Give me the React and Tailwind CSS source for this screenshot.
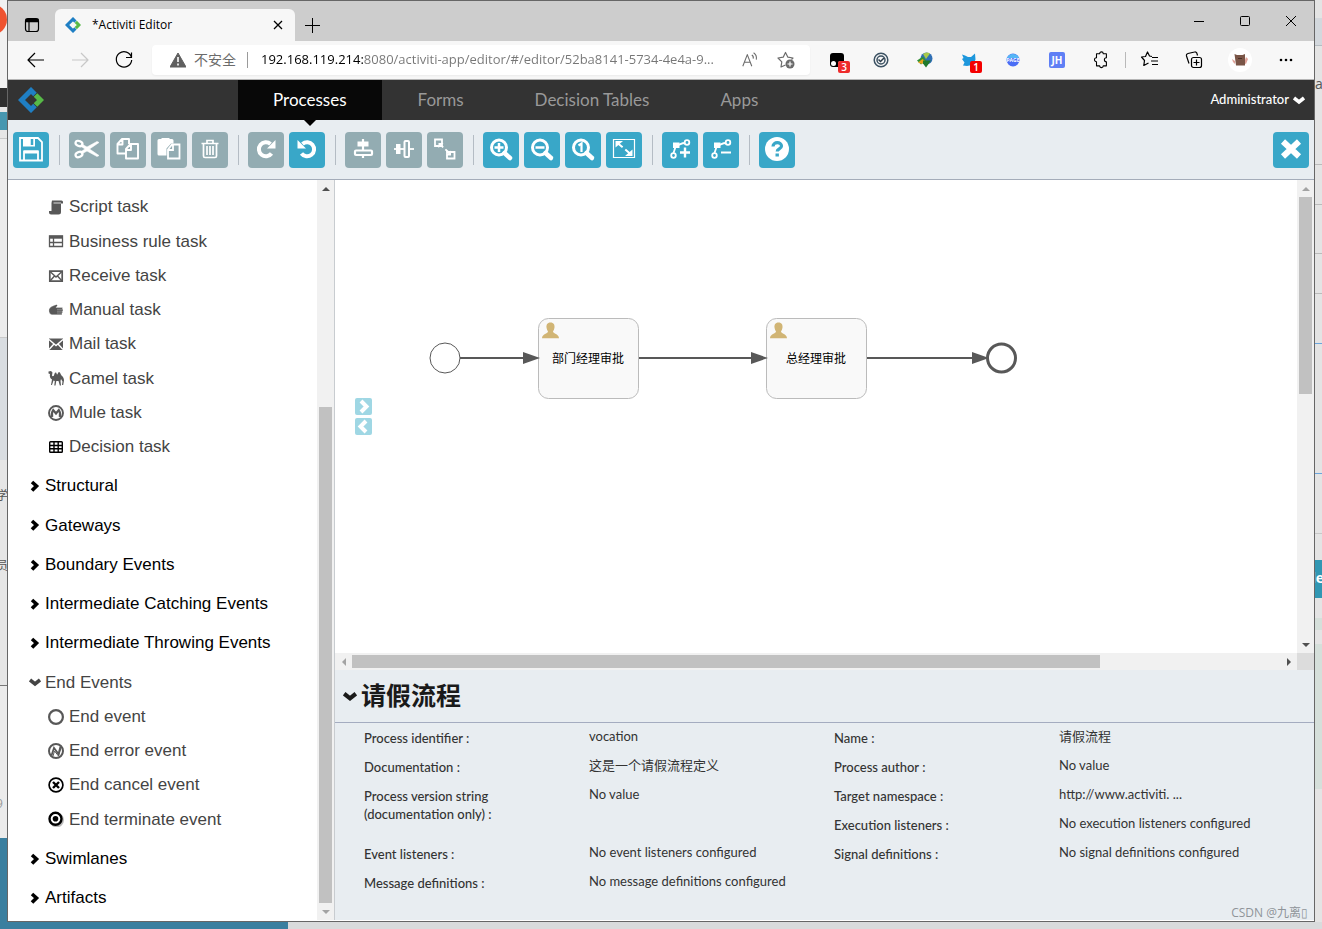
import clsx from 'clsx'

const NAV_LINKS = ['Processes', 'Forms', 'Decision Tables', 'Apps']

const TASKS = [
  { label: 'Script task', icon: 'script' },
  { label: 'Business rule task', icon: 'rule' },
  { label: 'Receive task', icon: 'receive' },
  { label: 'Manual task', icon: 'manual' },
  { label: 'Mail task', icon: 'mail' },
  { label: 'Camel task', icon: 'camel' },
  { label: 'Mule task', icon: 'mule' },
  { label: 'Decision task', icon: 'decision' },
]

const GROUPS = [
  'Structural',
  'Gateways',
  'Boundary Events',
  'Intermediate Catching Events',
  'Intermediate Throwing Events',
]

const END_EVENTS = [
  { label: 'End event', icon: 'end' },
  { label: 'End error event', icon: 'endError' },
  { label: 'End cancel event', icon: 'endCancel' },
  { label: 'End terminate event', icon: 'endTerminate' },
]

const TOOL_GROUPS = [
  [{ id: 'save', label: 'Save' }],
  [
    { id: 'cut', label: 'Cut', disabled: true },
    { id: 'copy', label: 'Copy', disabled: true },
    { id: 'paste', label: 'Paste', disabled: true },
    { id: 'trash', label: 'Delete', disabled: true },
  ],
  [
    { id: 'redo', label: 'Redo', disabled: true },
    { id: 'undo', label: 'Undo' },
  ],
  [
    { id: 'alignV', label: 'Align vertical', disabled: true },
    { id: 'alignH', label: 'Align horizontal', disabled: true },
    { id: 'sameSize', label: 'Same size', disabled: true },
  ],
  [
    { id: 'zoomIn', label: 'Zoom in' },
    { id: 'zoomOut', label: 'Zoom out' },
    { id: 'zoomActual', label: 'Zoom to actual size' },
    { id: 'zoomFit', label: 'Zoom to fit' },
  ],
  [
    { id: 'bendAdd', label: 'Add bend-point' },
    { id: 'bendRemove', label: 'Remove bend-point' },
  ],
  [{ id: 'help', label: 'Start guided tour' }],
]

const PROPERTIES = [
  { label: 'Process identifier', value: 'vocation' },
  { label: 'Name', value: '请假流程' },
  { label: 'Documentation', value: '这是一个请假流程定义' },
  { label: 'Process author', value: 'No value' },
  { label: 'Process version string (documentation only)', value: 'No value', tall: true },
  { label: 'Target namespace', value: 'http://www.activiti. ...' },
  { label: 'Execution listeners', value: 'No execution listeners configured' },
  { label: 'Event listeners', value: 'No event listeners configured' },
  { label: 'Signal definitions', value: 'No signal definitions configured' },
  { label: 'Message definitions', value: 'No message definitions configured' },
]

const zoomGlass = (
  <>
    <circle cx="16" cy="15.5" r="7.5" fill="none" strokeWidth="3" />
    <path d="M21.5 21 27 26" strokeWidth="4.5" strokeLinecap="round" />
  </>
)

const bendLine = (
  <>
    <path d="M11.5 21 14 13.5c3 0 5-2.500 9-2.500" fill="none" strokeWidth="1.8" />
    <circle cx="11.5" cy="23.5" r="2.3" fill="none" strokeWidth="1.8" />
    <circle cx="25" cy="10.5" r="2.3" fill="none" strokeWidth="1.8" />
    <path d="M11 10.500h6.500V16H11z" stroke="none" />
  </>
)

const redoArrow = (
  <>
    <path d="M23.5 21.500A7 7 0 1 1 22.500 12" fill="none" strokeWidth="4" />
    <path d="M27.500 8v8.500H19z" stroke="none" />
  </>
)

const TOOL_ICONS = {
  save: (
    <>
      <path d="M7 6h18l4 4v18.500H7z" fill="none" strokeWidth="1.8" />
      <path d="M10 6h12v8.500H10z" stroke="none" />
      <path d="M19 7v6" stroke="#39a7c8" strokeWidth="2.5" />
      <path d="M11 28v-8.500h14V28" fill="none" strokeWidth="1.8" />
      <path d="M11 20h14" strokeWidth="3" />
    </>
  ),
  cut: (
    <>
      <ellipse cx="10" cy="11.5" rx="3.6" ry="2.5" transform="rotate(25 10 11.5)" fill="none" strokeWidth="2.2" />
      <ellipse cx="10" cy="22.5" rx="3.6" ry="2.5" transform="rotate(-25 10 22.5)" fill="none" strokeWidth="2.2" />
      <path
        d="M12.500 12 18 15l10-5.500 2 1L20.500 17l9.500 6.500-2 1L18 19l-5.500 3-1-2 4.500-3-4.500-3z"
        stroke="#fff"
        strokeWidth=".6"
      />
    </>
  ),
  copy: (
    <g fill="none" strokeWidth="1.9" strokeLinejoin="round">
      <path d="M16 21.500H7.500V12L12 7h7v5M12.500 7v5.500H8" />
      <path d="M16 17 20.500 12H28v14.500H16zM21 12.500v5.500h-4.500" />
    </g>
  ),
  paste: (
    <>
      <path
        d="M8 7h2.500V6h8v1H21a1.500 1.500 0 0 1 1.500 1.500v3H20l-4.500 5v7H8A1.500 1.500 0 0 1 6.500 22V8.500A1.500 1.500 0 0 1 8 7z"
        stroke="none"
      />
      <path d="M17 17.500 21 12.500h7.500v14H17zM22 13v5h-4.500" fill="none" strokeWidth="1.8" />
    </>
  ),
  trash: (
    <g fill="none" strokeWidth="1.7">
      <path d="M9.500 11.500h17M15 11V8.500h6V11M11.500 12v12a1.500 1.500 0 0 0 1.500 1.500h10a1.500 1.500 0 0 0 1.500-1.500V12" />
      <path d="M15 14v9M18 14v9M21 14v9" />
    </g>
  ),
  redo: redoArrow,
  undo: <g transform="matrix(-1 0 0 1 36 0)">{redoArrow}</g>,
  alignV: (
    <>
      <path d="M18 7v19" strokeWidth="2.2" />
      <path d="M12.500 9.500h11v5h-11z" stroke="none" />
      <rect x="10" y="18.5" width="17" height="4.5" rx="1" strokeWidth="2.2" fill="#93acb2" />
    </>
  ),
  alignH: (
    <>
      <path d="M8 17h20" strokeWidth="1.8" />
      <path d="M10 12h4.500v10H10z" stroke="none" />
      <rect x="18.5" y="9" width="4.5" height="16" rx="1" strokeWidth="2" fill="#93acb2" />
    </>
  ),
  sameSize: (
    <>
      <path d="M8 7.500h7V14H8zM20 20h7.500v6.500H20z" fill="none" strokeWidth="1.8" />
      <path d="m12.500 12 11 10" strokeWidth="1.8" strokeDasharray="5 3" />
      <path d="M11.500 11h5l-5 5zM24 23.500h-5l5-5z" stroke="none" />
    </>
  ),
  zoomIn: (
    <>
      {zoomGlass}
      <path d="M11.500 15.500h9M16 11v9" strokeWidth="2.5" />
    </>
  ),
  zoomOut: (
    <>
      {zoomGlass}
      <path d="M11.500 15.500h9" strokeWidth="2.5" />
    </>
  ),
  zoomActual: (
    <>
      {zoomGlass}
      <path d="M13.500 13.500 16.500 11.500V20" fill="none" strokeWidth="2.2" />
    </>
  ),
  zoomFit: (
    <>
      <path d="M7.500 7.500h21v18h-21z" fill="none" strokeWidth="1.2" />
      <path d="m12 11.500 12 10" strokeWidth="2" strokeDasharray="6 3.5" />
      <path d="M9.500 9H17l-7.500 6.500zM26.500 24H19l7.500-6.500z" stroke="none" />
    </>
  ),
  bendAdd: (
    <>
      {bendLine}
      <path d="M18 20.500h10M23 15.500v10" strokeWidth="2.4" />
    </>
  ),
  bendRemove: (
    <>
      {bendLine}
      <path d="M18 20.500h10" strokeWidth="2" />
    </>
  ),
  help: (
    <>
      <circle cx="18" cy="17" r="12" stroke="none" />
      <path d="M14 14.500c0-5 8.500-5 8.500-.5 0 3-4.300 2.800-4.300 5.500" fill="none" stroke="#39a7c8" strokeWidth="3.2" />
      <path d="M16.500 21.500h3.400v3h-3.400z" fill="#39a7c8" stroke="none" />
    </>
  ),
  close: <path d="m10 9.500 16 15M26 9.500l-16 15" strokeWidth="6" />,
}

const STENCIL_ICONS = {
  script: (
    <>
      <path d="M4 1.500h9.500A1.500 1.500 0 0 1 15 3v1.500h-2V13a2.500 2.500 0 0 1-2.500 2.500H3A2 2 0 0 1 1 13.500V12h2.500V4z" fill="#585858" />
      <path d="M5.500 4h7.500" stroke="#fff" strokeWidth=".8" />
    </>
  ),
  rule: (
    <g fill="none" stroke="#585858" strokeWidth="1.3">
      <path d="M1.500 3h13v10.500h-13z" />
      <path d="M1 4.200h14" strokeWidth="3" />
      <path d="M1.500 9.500h13M5.500 5v8.500" />
    </g>
  ),
  receive: (
    <g fill="none" stroke="#585858">
      <path d="M1.800 3.200h12.400v10H1.800z" strokeWidth="1.7" />
      <path d="m2 3.500 6 5.500 6-5.500M2 13l4.500-5M14 13 9.500 8" strokeWidth="1.4" />
    </g>
  ),
  manual: (
    <path
      d="M1 7.500C2 4.500 6 3.500 8.500 2.500l1 1L8 5.500h6.500v1.800h.5v1.900h-.5v1.800H14v1.800H4.500C2.500 12.800.5 11 1 7.500zM9 7.300h5.500M9 9.200h6M9 11h5"
      fill="#585858"
      stroke="#fff"
      strokeWidth=".3"
    />
  ),
  mail: (
    <>
      <path d="M1 2.500h14V14H1z" fill="#585858" />
      <path d="m1 3.500 7 6 7-6M1 13.500 6 8M15 13.500 10 8" fill="none" stroke="#fff" strokeWidth="1.4" />
    </>
  ),
  camel: (
    <path
      d="M.5 1.500 3 1l1.500 1.500L4 5.500c.3 1 1.300 1 2 0C6.300 3.800 7 2 8 2.500c.8.500.5 2 1.200 2 .8 0 .6-2.500 1.800-2.500 1.500 0 1.500 2.500 2.500 3.500 1.700 1 2.500 3 2.500 5l-.8 4.500H14l.5-3.500-1.500-2.500-.5 2 .5 4.500h-1.200L10.500 11H8.300l-.8 4.500H6.300L6.800 11l-1.300-.5L4 15H3l1-5.500C2 8.500 1.500 6 2 4L.5 3.500z"
      fill="#585858"
    />
  ),
  mule: (
    <g fill="none" stroke="#585858">
      <circle cx="8" cy="8" r="7" strokeWidth="1.9" />
      <path d="M4.200 12c-1-3 0-5.500 1-7L8 8.500 10.800 5c1 1.500 2 4 1 7" strokeWidth="2.2" />
    </g>
  ),
  decision: (
    <g fill="none" stroke="#000" strokeWidth="1.4">
      <rect x="1.7" y="2.7" width="12.6" height="10.6" rx=".8" />
      <path d="M1.500 6.500h13M1.500 9.800h13M6 3v10.500M10.200 3v10.500" />
    </g>
  ),
  end: <circle cx="8" cy="8" r="6.900" fill="none" stroke="#585858" strokeWidth="2.2" />,
  endError: (
    <g fill="none" stroke="#585858">
      <circle cx="8" cy="8" r="7" strokeWidth="2" />
      <path d="M3.500 12.500 6 5l4.500 6 2-7.500" strokeWidth="1.8" />
      <path d="M5 13 6.500 8l4 5 2.500-8" />
    </g>
  ),
  endCancel: (
    <g fill="none" stroke="#000">
      <circle cx="8" cy="8" r="6.900" strokeWidth="1.700" />
      <path d="m5 5 6 6M11 5l-6 6" strokeWidth="2.4" />
    </g>
  ),
  endTerminate: (
    <>
      <circle cx="8.7" cy="9" r="6.300" fill="none" stroke="#bbb" strokeWidth="2" />
      <circle cx="7.5" cy="7.8" r="6" fill="#fff" stroke="#000" strokeWidth="2.4" />
      <circle cx="7.5" cy="7.8" r="2.8" />
    </>
  ),
}

function Logo({ className }) {
  return (
    <svg viewBox="0 0 26 26" className={className} fill="none" strokeWidth="5" aria-hidden="true">
      <path d="m17 7.500-4-4L3.500 13l9.500 9.500 4-4" stroke="#1f7fc4" />
      <path d="m17.500 8 5 5-5 5" stroke="#57b947" />
    </svg>
  )
}

function Chevron({ open, className }) {
  return (
    <svg viewBox="0 0 12 12" className={className} fill="none" stroke="currentColor" strokeWidth="3.6" aria-hidden="true">
      <path d={open ? 'm1 4 5 4 5-4' : 'm3 2 4.500 4L3 10.500'} />
    </svg>
  )
}

function ChromeButton({ label, wide, className, children }) {
  return (
    <button
      type="button"
      aria-label={label}
      className={clsx('flex h-full shrink-0 items-center justify-center', wide ? 'w-12' : 'w-11', className)}
    >
      {children}
    </button>
  )
}

function LineIcon({ children, className = 'size-5' }) {
  return (
    <svg
      viewBox="0 0 20 20"
      className={className}
      fill="none"
      stroke="currentColor"
      strokeWidth="1.2"
      strokeLinejoin="round"
      aria-hidden="true"
    >
      {children}
    </svg>
  )
}

function TitleBar() {
  return (
    <div className="flex h-10 items-end bg-[#cdcdcd]">
      <button type="button" aria-label="Tab actions" className="flex h-8 w-[47px] items-center justify-center">
        <LineIcon>
          <rect x="3.500" y="3.500" width="13" height="13" rx="2.500" />
          <path d="M3.500 5h13M3.500 6h13" strokeWidth="2.500" />
          <path d="M7 6v10.500" />
        </LineIcon>
      </button>
      <div className="flex h-8 w-60 items-center rounded-t-md bg-[#f7f7f7] pl-[10px] pr-[7px]">
        <Logo className="size-4" />
        <span className="ml-[11px] flex-1 text-xs">*Activiti Editor</span>
        <button type="button" aria-label="Close tab" className="flex size-5 items-center justify-center">
          <svg viewBox="0 0 10 10" className="size-[10px]" stroke="#000" strokeWidth="1.3">
            <path d="m1 1 8 8M9 1 1 9" />
          </svg>
        </button>
      </div>
      <button type="button" aria-label="New tab" className="flex h-8 w-[34px] items-center justify-center">
        <svg viewBox="0 0 16 16" className="size-4" stroke="#000" strokeWidth="1">
          <path d="M8.500 1v15M1 8.500h15" />
        </svg>
      </button>
      <div className="ml-auto flex h-full">
        {[
          ['Minimize', 'M0 5.500h10'],
          ['Maximize', 'M1.500.5h7a1 1 0 0 1 1 1v7a1 1 0 0 1-1 1h-7a1 1 0 0 1-1-1v-7a1 1 0 0 1 1-1z'],
          ['Close', 'm0 0 10 10M10 0 0 10'],
        ].map(([label, d]) => (
          <button key={label} type="button" aria-label={label} className="flex w-[46px] items-center justify-center">
            <svg viewBox="0 0 10 10" className="size-[10px]" fill="none" stroke="#000">
              <path d={d} />
            </svg>
          </button>
        ))}
      </div>
    </div>
  )
}

function Badge({ children, className }) {
  return (
    <span
      className={clsx(
        'absolute -bottom-[6px] -right-[6px] flex size-3 items-center justify-center rounded-xs text-[10px] font-semibold leading-none text-white',
        className,
      )}
    >
      {children}
    </span>
  )
}

function AddressBar() {
  return (
    <div className="flex h-[39px] items-center border-b border-[#b5b5b5] bg-[#f7f7f7] px-[6px]">
      <ChromeButton label="Back">
        <LineIcon>
          <path d="M18 10H2.500M9 3l-7 7 7 7" />
        </LineIcon>
      </ChromeButton>
      <ChromeButton label="Forward" className="text-[#c8c8c8]">
        <LineIcon>
          <path d="M2 10h15.500M11 3l7 7-7 7" />
        </LineIcon>
      </ChromeButton>
      <ChromeButton label="Refresh">
        <LineIcon>
          <path d="M17.500 7.500A7.700 7.700 0 1 0 17.700 10M17.500 2.500v5H12" />
        </LineIcon>
      </ChromeButton>
      <div className="ml-[6px] flex h-[30px] flex-1 items-center rounded-sm bg-white pl-[18px] shadow-xs">
        <svg viewBox="0 0 16 16" className="size-4 shrink-0" aria-hidden="true">
          <path d="M8 1 16 15H0z" fill="#5f5f5f" stroke="#5f5f5f" strokeLinejoin="round" />
          <path d="M8 5v5M8 11.500v2" stroke="#fff" strokeWidth="1.6" />
        </svg>
        <span className="ml-2 shrink-0 text-sm text-[#6b6b6b]">不安全</span>
        <span className="ml-[11px] h-4 w-px shrink-0 bg-[#9a9a9a]" />
        <input
          type="text"
          aria-label="Address"
          defaultValue="192.168.119.214:8080/activiti-app/editor/#/editor/52ba8141-5734-4e4a-9..."
          className="ml-[13px] min-w-0 flex-1 bg-linear-to-r from-black from-[103px] to-[#767676] to-[103px] bg-clip-text text-[13px] text-transparent outline-none"
        />
        <button type="button" aria-label="Read aloud" className="flex w-9 shrink-0 items-center justify-center text-[#6b6b6b]">
          <LineIcon className="size-[18px]">
            <path d="m2 17 5-13 5 13M4 12.500h6M12 4.500c1.500 1 2 2.500 1.500 4M14 2c3 2 3.500 4.500 3 7.500" />
          </LineIcon>
        </button>
        <button type="button" aria-label="Add to favorites" className="mr-[6px] flex w-9 shrink-0 items-center justify-center text-[#6b6b6b]">
          <LineIcon>
            <path d="M9.500 15 5 17l.8-5.200L2 8l5.200-.8L9.500 2.500l2.400 4.700L17 8l-1.500 1.500" />
            <circle cx="14" cy="14" r="4.500" fill="#6b6b6b" stroke="none" />
            <path d="M14 11.500v5M11.500 14h5" stroke="#fff" />
          </LineIcon>
        </button>
      </div>
      <div className="ml-[5px] flex h-full">
        <ChromeButton label="Tampermonkey">
          <span className="relative">
            <svg viewBox="0 0 14 14" className="size-[14px]">
              <rect width="14" height="14" rx="3" />
              <circle cx="3.500" cy="10.500" r="2.500" fill="#fff" />
              <circle cx="10.500" cy="10.500" r="2.500" fill="#fff" />
            </svg>
            <Badge className="bg-[#ee2c2c]">3</Badge>
          </span>
        </ChromeButton>
        <ChromeButton label="Sync extension">
          <svg viewBox="0 0 16 16" className="size-4" fill="none">
            <circle cx="8" cy="8" r="6.800" stroke="#3c5263" strokeWidth="1.500" />
            <circle cx="8" cy="8" r="4" stroke="#3c5263" strokeWidth="1.500" />
            <path d="m5.500 7.500 2 2L11 6" stroke="#2b3c4a" strokeWidth="1.500" />
          </svg>
        </ChromeButton>
        <ChromeButton label="Download manager">
          <svg viewBox="0 0 16 16" className="size-4">
            <circle cx="9.500" cy="6.500" r="6" fill="#2f6fb5" />
            <path d="M6 2a6 6 0 0 1 7-.5L9 7z" fill="#a9c94a" />
            <path d="M0 8.500 6 4.500l3 4-5 4z" fill="#2f8f34" />
            <path d="M1 10.500 5.500 7 8 9l-3 3z" fill="#e4a21b" />
            <path d="M6 8.500h8L9 15.500l-3-4z" fill="#217a2b" />
          </svg>
        </ChromeButton>
        <ChromeButton label="Cat extension">
          <span className="relative">
            <svg viewBox="0 0 14 14" className="size-[14px]">
              <path d="M0 1.500 3 2.500 6 4h3l4-3.500.5 6L12 10l1 3-3-1-5 1-4-.5 1.500-3L0 6l1.500-1z" fill="#1d97dc" />
            </svg>
            <Badge className="bg-[#f40000]">1</Badge>
          </span>
        </ChromeButton>
        <ChromeButton label="Page extension">
          <svg viewBox="0 0 16 16" className="size-4">
            <circle cx="8" cy="8" r="6.500" fill="#4a6df5" />
            <path d="M2 6a6.500 6.500 0 0 1 12 0z" fill="#55b6f5" />
            <text x="8" y="10" textAnchor="middle" fontSize="5" fontWeight="700" fill="#fff">
              PAGE
            </text>
          </svg>
        </ChromeButton>
        <ChromeButton label="JH extension">
          <span className="flex size-4 items-center justify-center rounded-xs bg-[#5f7ff5] text-[10px] font-bold leading-none text-white">
            JH
          </span>
        </ChromeButton>
        <ChromeButton label="Extensions">
          <LineIcon className="size-[18px]">
            <path d="M5 3h3.500a2 2 0 0 1 4 0H16v4.500a2.200 2.200 0 0 0 0 4.500v4.500h-3.500a2 2 0 0 1-4 0H5V12a2.200 2.200 0 1 1 0-4.500z" />
          </LineIcon>
        </ChromeButton>
      </div>
      <span className="mx-[2px] h-4 w-px bg-[#b9b9b9]" />
      <ChromeButton label="Favorites">
        <LineIcon>
          <path d="M12 6.500 9.500 6 7.500 2 5.500 6.500 1.500 7l3 3.500-.7 5 4.700-2.500M12 7.500h6M11 11h7M12 14.500h6" />
        </LineIcon>
      </ChromeButton>
      <ChromeButton label="Collections">
        <LineIcon>
          <rect x="7.500" y="7.500" width="10" height="10" rx="2" />
          <path d="M12.500 9.500v6M9.500 12.500h6M5 13.500 2.500 6A2 2 0 0 1 4 3.500L10.500 2A2 2 0 0 1 13 3.500l.5 2" />
        </LineIcon>
      </ChromeButton>
      <ChromeButton label="Profile" wide>
        <span className="flex size-6 items-center justify-center rounded-full bg-white">
          <svg viewBox="0 0 16 14" className="h-[14px] w-4">
            <path d="M0 6 3 8v3L1 9zM14 4l2 2-2 5-2-1z" fill="#e0a39a" />
            <path d="M2.500 1 5 2h5.500L13 1v11.500H4z" fill="#7a5547" />
            <path d="M6 5.500h4" stroke="#4b3027" />
          </svg>
        </span>
      </ChromeButton>
      <ChromeButton label="Settings and more">
        <svg viewBox="0 0 14 4" className="h-1 w-[14px]">
          <circle cx="2" cy="2" r="1.300" />
          <circle cx="7" cy="2" r="1.300" />
          <circle cx="12" cy="2" r="1.300" />
        </svg>
      </ChromeButton>
    </div>
  )
}

function AppHeader() {
  return (
    <header className="flex h-10 bg-[#333] font-[Lato,sans-serif]">
      <a href="#/" aria-label="Activiti" className="flex w-[230px] items-center pl-[10px]">
        <Logo className="size-[26px]" />
      </a>
      <nav className="flex gap-px">
        {NAV_LINKS.map((name, i) => (
          <a
            key={name}
            href={`#/${name.toLowerCase().replace(' ', '-')}`}
            className={clsx(
              'relative flex items-center px-[35px] text-[17px]',
              i === 0 ? 'bg-[#080808] text-white' : 'text-[#999]',
            )}
          >
            {name}
            {i === 0 && (
              <span className="absolute left-1/2 top-full -translate-x-1/2 border-x-6 border-t-6 border-x-transparent border-t-black" />
            )}
          </a>
        ))}
      </nav>
      <button type="button" className="ml-auto flex items-center gap-1 pr-[9px] text-[13px] font-medium text-white">
        Administrator
        <Chevron open className="size-3" />
      </button>
    </header>
  )
}

function ToolButton({ tool }) {
  return (
    <button
      type="button"
      aria-label={tool.label}
      disabled={tool.disabled}
      className={clsx('size-9 shrink-0 rounded-sm', tool.disabled ? 'bg-[#93acb2]' : 'bg-[#39a7c8]')}
    >
      <svg viewBox="0 0 36 36" className="size-9" fill="#fff" stroke="#fff">
        {TOOL_ICONS[tool.id]}
      </svg>
    </button>
  )
}

function Toolbar() {
  return (
    <div className="flex h-[60px] items-center gap-[5px] border-b border-[#a4acb9] bg-[#e8edf1] px-[5px]">
      {TOOL_GROUPS.map((group, i) => (
        <div key={group[0].id} className="flex items-center gap-[5px]">
          {i > 0 && <span className="ml-[5px] mr-1 h-[30px] w-px bg-[#b4bcc4]" />}
          {group.map((tool) => (
            <ToolButton key={tool.id} tool={tool} />
          ))}
        </div>
      ))}
      <div className="ml-auto flex">
        <ToolButton tool={{ id: 'close', label: 'Close editor' }} />
      </div>
    </div>
  )
}

function ScrollArrow({ d, muted }) {
  return (
    <span className="flex size-[17px] shrink-0 items-center justify-center">
      <svg viewBox="0 0 8 8" className="size-2" fill={muted ? '#a3a3a3' : '#505050'}>
        <path d={d} />
      </svg>
    </span>
  )
}

function VerticalScrollbar({ atEnd }) {
  return (
    <div className="flex w-[17px] shrink-0 flex-col items-center bg-[#f1f1f1]">
      <ScrollArrow d="M0 6h8L4 2z" muted={!atEnd} />
      {atEnd && <span className="grow-[210]" />}
      <span className={clsx('w-[13px] bg-[#c1c1c1]', atEnd ? 'grow-[496]' : 'grow-[197]')} />
      {!atEnd && <span className="grow-[242]" />}
      <ScrollArrow d="M0 2h8L4 6z" muted={atEnd} />
    </div>
  )
}

function HorizontalScrollbar() {
  return (
    <div className="flex h-[17px] shrink-0 items-center bg-[#f1f1f1]">
      <ScrollArrow d="M6 0v8L2 4z" muted />
      <span className="h-[13px] grow-[748] bg-[#c1c1c1]" />
      <span className="grow-[180]" />
      <ScrollArrow d="M2 0v8l4-4z" />
      <span className="size-[17px] bg-[#dcdcdc]" />
    </div>
  )
}

function StencilGroup({ name, open }) {
  return (
    <li className="flex h-[39px] items-end">
      <button
        type="button"
        aria-expanded={Boolean(open)}
        className={clsx('flex h-[34px] items-center gap-1 pl-[21px] text-[17px]', open ? 'text-[#444]' : 'text-black')}
      >
        <Chevron open={open} className="size-3" />
        {name}
      </button>
    </li>
  )
}

function StencilItem({ item }) {
  return (
    <li className="flex h-[34px] items-center gap-[5px] pl-10 text-[17px] text-[#444]">
      <svg viewBox="0 0 16 16" className="size-4" aria-hidden="true">
        {STENCIL_ICONS[item.icon]}
      </svg>
      {item.label}
    </li>
  )
}

function Palette() {
  return (
    <aside className="flex w-[327px] shrink-0 border-r border-[#c8ccd0] bg-white font-[Liberation_Sans,sans-serif]">
      <ul className="flex flex-1 flex-col justify-between pb-[5px] pt-[10px]">
        {TASKS.map((item) => (
          <StencilItem key={item.label} item={item} />
        ))}
        {GROUPS.map((name) => (
          <StencilGroup key={name} name={name} />
        ))}
        <StencilGroup name="End Events" open />
        {END_EVENTS.map((item) => (
          <StencilItem key={item.label} item={item} />
        ))}
        <StencilGroup name="Swimlanes" />
        <StencilGroup name="Artifacts" />
      </ul>
      <VerticalScrollbar atEnd />
    </aside>
  )
}

function UserTask({ x, label }) {
  return (
    <g transform={`translate(${x} 138)`}>
      <rect x=".5" y=".5" width="100" height="80" rx="10" fill="#f9f9f9" stroke="#bbb" />
      <path
        d="M12.500 4.500c3.300 0 4.300 2.500 4 5-.3 2-1 3.300-1.500 4 0 2 6 2.500 6 6.800H4c0-4.300 6-4.800 6-6.800-.5-.7-1.200-2-1.500-4-.3-2.500.7-5 4-5z"
        fill="#d1b575"
      />
      <text x="50" y="45" textAnchor="middle" fontSize="12" fill="#000">
        {label}
      </text>
    </g>
  )
}

function Flow({ from, to }) {
  return (
    <g>
      <path d={`M${from} 178H${to - 10}`} stroke="#585858" strokeWidth="2" />
      <path d={`M${to} 178l-17-6v12z`} fill="#585858" />
    </g>
  )
}

function Canvas() {
  return (
    <div className="flex min-h-[300px] flex-1">
      <div className="relative min-w-0 flex-1 overflow-hidden bg-white">
        <svg width="720" height="240" className="font-[Noto_Sans_CJK_SC,sans-serif]">
          <circle cx="110" cy="178" r="15" fill="#fff" stroke="#585858" />
          <UserTask x={203} label="部门经理审批" />
          <UserTask x={431} label="总经理审批" />
          <Flow from={125} to={205} />
          <Flow from={304} to={433} />
          <Flow from={532} to={654} />
          <circle cx="666.5" cy="178" r="14" fill="#fff" stroke="#585858" strokeWidth="3" />
        </svg>
        <div className="absolute left-5 top-[218px] flex flex-col gap-[3px]">
          {['m6 3 5.500 5.500L6 14', 'M11 3 5.500 8.500 11 14'].map((d, i) => (
            <button
              key={d}
              type="button"
              aria-label={i === 0 ? 'Extend canvas right' : 'Shrink canvas left'}
              className="size-[17px] rounded-xs bg-[#9fd7e4]"
            >
              <svg viewBox="0 0 17 17" className="size-[17px]" fill="none" stroke="#fff" strokeWidth="4">
                <path d={d} />
              </svg>
            </button>
          ))}
        </div>
      </div>
      <VerticalScrollbar />
    </div>
  )
}

function PropertyPanel() {
  return (
    <section className="bg-[#e8edf1] text-[#333]">
      <h2 className="flex h-[53px] items-center gap-1 border-b border-[#a4acc0] pl-2 text-[25px] font-bold text-[#1a1a1a]">
        <Chevron open className="size-[14px]" />
        请假流程
      </h2>
      <dl className="grid auto-rows-[29px] grid-cols-[225px_245px_225px_1fr] pb-[23px] pl-[29px] font-[Lato,Noto_Sans_CJK_SC,sans-serif] text-[13px] leading-[18px]">
        {PROPERTIES.map((prop) => (
          <div key={prop.label} className={clsx('col-span-2 grid grid-cols-subgrid', prop.tall && 'row-span-2')}>
            <dt className="max-w-[160px] pt-[6px] font-medium">{`${prop.label} :`}</dt>
            <dd className="pt-1">{prop.value}</dd>
          </div>
        ))}
      </dl>
    </section>
  )
}

function LeftBackdrop() {
  return (
    <div className="flex w-[7px] shrink-0 flex-col overflow-hidden bg-[#e6e6e6] text-xs text-[#555]">
      <div className="h-[88px] bg-[#f1f1f1] pt-1">
        <div className="-ml-6 size-[31px] rounded-full bg-[#ef5330]" />
      </div>
      <div className="h-[19px] bg-[#2f2f2f]" />
      <div className="mt-[5px] h-[18px] bg-[#4797b0]" />
      <div className="mt-2 h-[200px] border-y border-[#c9c9c9] bg-[#ececec]" />
      <div className="h-[122px] bg-[#d9dde1]" />
      <div className="mt-7 h-5">
        <span className="-ml-1 block w-4">学</span>
      </div>
      <div className="mt-[50px] h-5">
        <span className="-ml-1 block w-4">员</span>
      </div>
      <div className="mt-[107px] h-px bg-[#777]" />
      <div className="h-[152px] bg-[#ebebeb] pt-[110px] text-[#999]">
        <span className="-ml-1 block">9</span>
      </div>
      <div className="flex-1 bg-[#3a7f9f]" />
    </div>
  )
}

function RightBackdrop() {
  return (
    <div className="flex w-[7px] shrink-0 flex-col overflow-hidden bg-[#e4e4e4] text-sm">
      <div className="h-[18px]" />
      <div className="h-7 border-b border-[#b5bcc2] bg-[#d3d8dd]" />
      <div className="h-[119px] border-b border-[#bbb] pt-7 text-[#555]">a</div>
      <div className="h-10 border-b border-[#bbb]" />
      <div className="h-[49px] border-b border-[#bbb]" />
      <div className="h-10 border-b border-[#bbb]" />
      <div className="h-[50px] border-b border-[#6aa5dd]" />
      <div className="h-[130px] border-b border-[#6aa5dd]" />
      <div className="h-[60px] border-b border-[#c8c8c8]" />
      <div className="mt-[26px] h-[38px] bg-[#3197b3] pt-2 font-bold text-white">
        <span className="-ml-2 block w-5">de</span>
      </div>
      <div className="mt-5 h-3 bg-[#d5dfda]" />
      <div className="mt-[14px] h-[145px] bg-[#d5dfda]" />
    </div>
  )
}

export default function App() {
  return (
    <div className="flex min-h-screen flex-col font-[Open_Sans,Noto_Sans_CJK_SC,sans-serif]">
      <div className="flex flex-1">
        <LeftBackdrop />
        <div className="relative flex min-w-0 flex-1 flex-col border border-[#666] bg-white">
          <TitleBar />
          <AddressBar />
          <AppHeader />
          <Toolbar />
          <div className="flex flex-1 border-b border-white">
            <Palette />
            <main className="flex min-w-0 flex-1 flex-col">
              <Canvas />
              <HorizontalScrollbar />
              <PropertyPanel />
            </main>
          </div>
          <span className="absolute bottom-0 right-[6px] text-xs text-[#8f9499]">CSDN @九离▯</span>
        </div>
        <RightBackdrop />
      </div>
      <div className="flex h-[7px]">
        <div className="w-72 bg-[#3a7f9f]" />
        <div className="flex-1 bg-[#d9dbdc]" />
      </div>
    </div>
  )
}
